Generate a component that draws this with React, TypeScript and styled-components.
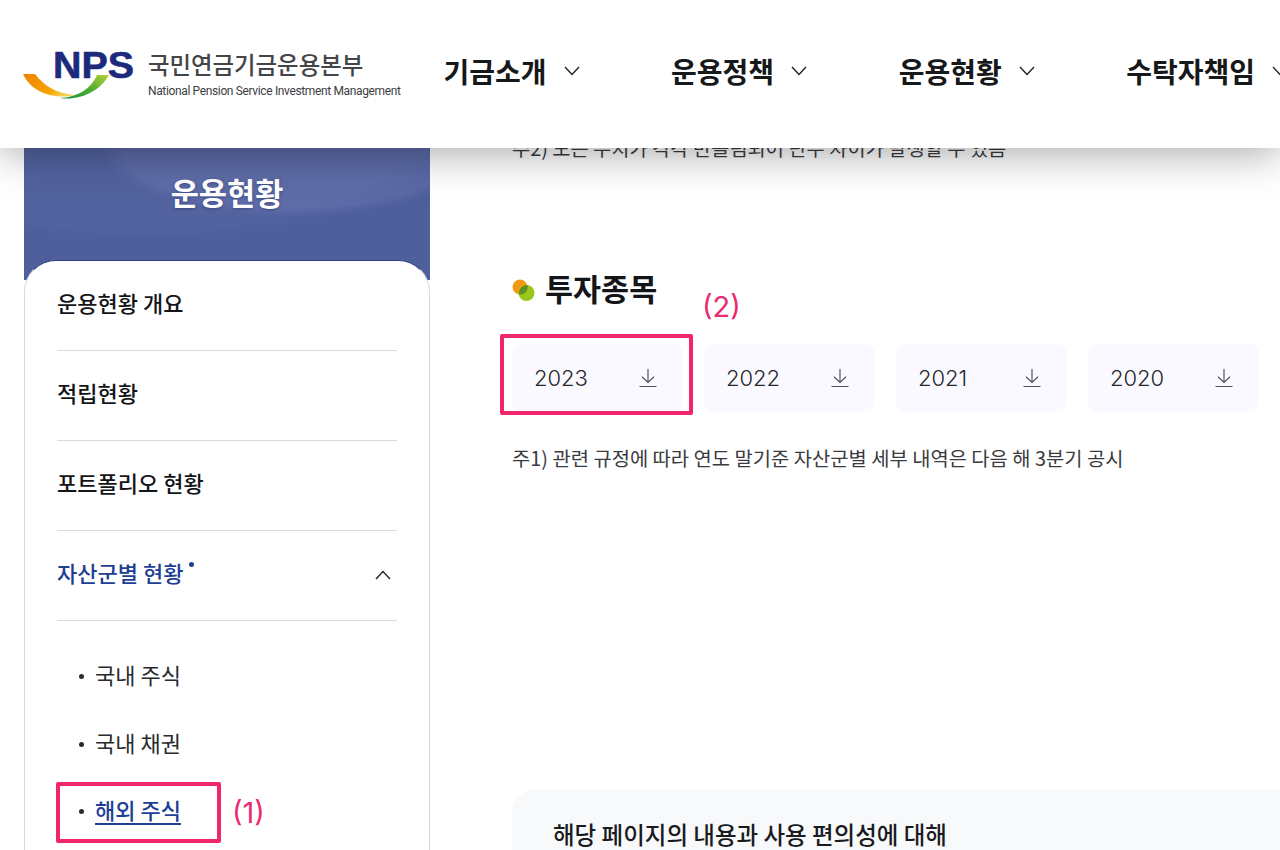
import styled, { createGlobalStyle } from "styled-components";

const GlobalStyle = createGlobalStyle`
  html, body {
    margin: 0;
    padding: 0;
    background: #fff;
  }
  body {
    font-family: "Inter", "Noto Sans CJK KR", sans-serif;
    color: #111;
  }
  *, *::before, *::after {
    box-sizing: border-box;
  }
`;

const NAV_ITEMS = ["기금소개", "운용정책", "운용현황", "수탁자책임"];
const MENU_ITEMS = ["운용현황 개요", "적립현황", "포트폴리오 현황"];
const YEARS = ["2023", "2022", "2021", "2020"];

const Chevron = ({ up, size = 16 }: { up?: boolean; size?: number }) => (
  <svg width={size} height={size * 0.6} viewBox="0 0 16 9.6" fill="none">
    <path
      d={up ? "M1 9 L8 1.5 L15 9" : "M1 1 L8 8.5 L15 1"}
      stroke="#222"
      strokeWidth="1.4"
    />
  </svg>
);

const DownloadIcon = () => (
  <svg width="18" height="20" viewBox="0 0 18 20" fill="none">
    <path
      d="M0.5 18.5 H17.5 M9 1 V14.5 M3 8.8 L9 14.5 L15 8.8"
      stroke="#55565c"
      strokeWidth="1.2"
    />
  </svg>
);

const LogoMark = () => (
  <LogoSvg width="114" height="60" viewBox="0 -8 114 60" fill="none">
    <defs>
      <linearGradient id="swooshOrange" x1="0" y1="0" x2="1" y2="0.4">
        <stop offset="0" stopColor="#ee8300" />
        <stop offset="0.7" stopColor="#f5a400" />
        <stop offset="1" stopColor="#f8cf50" />
      </linearGradient>
      <linearGradient id="swooshGreen" x1="0" y1="1" x2="1" y2="0">
        <stop offset="0" stopColor="#12933f" />
        <stop offset="0.55" stopColor="#55b030" />
        <stop offset="1" stopColor="#b5d334" />
      </linearGradient>
    </defs>
    <text
      x="30"
      y="29"
      fontFamily="Liberation Sans, sans-serif"
      fontWeight="700"
      fontSize="36"
      textLength="81"
      lengthAdjust="spacingAndGlyphs"
      fill="#1d2a7c"
      stroke="#1d2a7c"
      strokeWidth="0.6"
    >
      NPS
    </text>
    <path
      d="M0 25 L12 25 C21 37 33 44 51 46 C37 50 10 47 0 25 Z"
      fill="url(#swooshOrange)"
    />
    <path
      d="M74 26 L86 26 C77 42 57 52 37 49 C52 48 67 42 74 26 Z"
      fill="url(#swooshGreen)"
    />
  </LogoSvg>
);

const TitleBullet = () => (
  <BulletSvg width="24" height="24" viewBox="0 0 24 24">
    <circle cx="8" cy="8" r="7.5" fill="#f39a12" />
    <circle cx="14.5" cy="14" r="8" fill="#9ac51a" />
    <path
      d="M8 15.5 A7.5 7.5 0 0 0 15.4 6.05 A8 8 0 0 0 7.1 15.45 Z"
      fill="#5f8f22"
    />
  </BulletSvg>
);

export default function App() {
  return (
    <>
      <GlobalStyle />
      <Page>
        <Header>
          <Logo>
            <LogoMark />
            <LogoText>
              <LogoTitle>국민연금기금운용본부</LogoTitle>
              <LogoSub>National Pension Service Investment Management</LogoSub>
            </LogoText>
          </Logo>
          <Nav>
            {NAV_ITEMS.map((item) => (
              <NavItem key={item}>
                {item}
                <Chevron />
              </NavItem>
            ))}
          </Nav>
        </Header>

        <Body>
          <Sidebar>
            <SideHero>
              <SideTitle>운용현황</SideTitle>
            </SideHero>
            <SideCard>
              {MENU_ITEMS.map((item) => (
                <MenuRow key={item}>{item}</MenuRow>
              ))}
              <MenuRow $active>
                <ActiveLabel>자산군별 현황</ActiveLabel>
                <ActiveChevron>
                  <Chevron up />
                </ActiveChevron>
              </MenuRow>
              <SubList>
                <SubItem>국내 주식</SubItem>
                <SubItem>국내 채권</SubItem>
                <SubItem $selected>
                  <u>해외 주식</u>
                  <Callout $top={15} $left={175}>
                    (1)
                  </Callout>
                </SubItem>
              </SubList>
            </SideCard>
          </Sidebar>

          <Main>
            <Footnote>주2) 모든 수치가 각각 반올림되어 단수 차이가 발생할 수 있음</Footnote>
            <SectionTitle>
              <TitleBullet />
              투자종목
            </SectionTitle>
            <YearRow>
              {YEARS.map((year, i) => (
                <YearButton key={year} $selected={i === 0}>
                  {year}
                  <DownloadIcon />
                  {i === 0 && (
                    <Callout $top={-57} $left={190}>
                      (2)
                    </Callout>
                  )}
                </YearButton>
              ))}
            </YearRow>
            <Note>주1) 관련 규정에 따라 연도 말기준 자산군별 세부 내역은 다음 해 3분기 공시</Note>
            <Feedback>해당 페이지의 내용과 사용 편의성에 대해</Feedback>
          </Main>
        </Body>
      </Page>
    </>
  );
}

const Page = styled.div`
  position: relative;
  width: 1280px;
  height: 850px;
  overflow: hidden;
  background: #fff;
`;

const Header = styled.header`
  position: absolute;
  top: 0;
  left: 0;
  z-index: 10;
  width: 100%;
  height: 148px;
  display: flex;
  align-items: center;
  padding-left: 23px;
  background: #fff;
  box-shadow: 0 4px 40px rgba(0, 0, 0, 0.36);
`;

const Logo = styled.div`
  display: flex;
  align-items: center;
  gap: 11px;
  margin-top: 1px;
`;

const LogoSvg = styled.svg`
  margin-top: -8px;
`;

const LogoText = styled.div`
  display: flex;
  flex-direction: column;
  gap: 5px;
  margin-top: -2px;
`;

const LogoTitle = styled.div`
  font-family: "Noto Sans CJK KR", sans-serif;
  font-size: 23.4px;
  line-height: 30px;
  font-weight: 500;
  color: #444548;
  white-space: nowrap;
`;

const LogoSub = styled.div`
  font-family: "Roboto", sans-serif;
  font-size: 12px;
  line-height: 14px;
  letter-spacing: -0.36px;
  color: #3d3e42;
  white-space: nowrap;
`;

const Nav = styled.nav`
  display: flex;
  align-items: center;
  margin-left: 43px;
  gap: 91.5px;
`;

const NavItem = styled.div`
  display: flex;
  align-items: center;
  gap: 17px;
  font-family: "Noto Sans CJK KR", sans-serif;
  font-size: 28px;
  font-weight: 700;
  color: #17181a;
  white-space: nowrap;
  margin-top: -6px;
`;

const Body = styled.div`
  display: flex;
  gap: 82px;
  padding-left: 24px;
`;

const Sidebar = styled.aside`
  flex: 0 0 406px;
  display: flex;
  flex-direction: column;
`;

const SideHero = styled.div`
  height: 280px;
  padding-top: 167px;
  text-align: center;
  background:
    radial-gradient(ellipse 190px 66px at 66% 150px, rgba(125, 135, 195, 0.26) 0 88%, transparent 100%),
    radial-gradient(ellipse 300px 110px at 30% 130px, rgba(110, 120, 180, 0.14) 0 90%, transparent 100%),
    #4e5f9c;
`;

const SideTitle = styled.h2`
  margin: 0;
  font-family: "Noto Sans CJK KR", sans-serif;
  font-size: 30.6px;
  line-height: 50px;
  font-weight: 700;
  color: #fff;
  text-shadow: 0 1px 3px rgba(30, 40, 90, 0.45);
`;

const SideCard = styled.div`
  margin-top: -20px;
  padding: 0 32px;
  height: 620px;
  background: #fff;
  border: 1px solid #d8d9dc;
  border-top-color: #2f4489;
  border-radius: 32px 32px 0 0;
`;

const MenuRow = styled.div<{ $active?: boolean }>`
  display: flex;
  align-items: center;
  justify-content: space-between;
  height: 90px;
  padding: 0 6px 7px 0;
  border-bottom: 1px solid #d9dadd;
  font-family: "Noto Sans CJK KR", sans-serif;
  font-size: 22px;
  font-weight: 500;
  color: ${(p) => (p.$active ? "#1d4094" : "#141518")};
`;

const ActiveLabel = styled.span`
  position: relative;
  &::after {
    content: "";
    position: absolute;
    top: 6px;
    right: -11px;
    width: 5px;
    height: 5px;
    border-radius: 50%;
    background: #1d4094;
  }
`;

const ActiveChevron = styled.span`
  display: flex;
  margin-top: 6px;
`;

const SubList = styled.ul`
  list-style: none;
  margin: 0;
  padding: 22px 0 0;
`;

const SubItem = styled.li<{ $selected?: boolean }>`
  position: relative;
  height: 67.5px;
  display: flex;
  align-items: center;
  padding: 0 0 5px 38px;
  font-family: "Noto Sans CJK KR", sans-serif;
  font-size: 22px;
  font-weight: ${(p) => (p.$selected ? 500 : 400)};
  color: ${(p) => (p.$selected ? "#1d4094" : "#2a2b2e")};

  u {
    text-underline-offset: 4px;
    text-decoration-thickness: 2px;
  }

  &::before {
    content: "";
    position: absolute;
    left: 22px;
    top: 50%;
    width: 5px;
    height: 5px;
    margin-top: -2.5px;
    border-radius: 50%;
    background: #2a2b2e;
  }

  ${(p) =>
    p.$selected &&
    `
    &::after {
      content: "";
      position: absolute;
      left: -1px;
      top: 4px;
      width: 165px;
      height: 61px;
      border: 4px solid #f0266f;
      border-radius: 2px;
    }
  `}
`;

const Callout = styled.span<{ $top: number; $left: number }>`
  position: absolute;
  top: ${(p) => p.$top}px;
  left: ${(p) => p.$left}px;
  font-family: "Inter", sans-serif;
  font-size: 29px;
  line-height: 40px;
  font-weight: 400;
  color: #ea2a72;
  text-decoration: none;
`;

const Main = styled.main`
  flex: 1;
  min-width: 0;
  padding-top: 134px;
`;

const Footnote = styled.p`
  margin: 0;
  font-family: "Noto Sans CJK KR", sans-serif;
  font-size: 19.8px;
  line-height: 28px;
  color: #3a3b3f;
  white-space: nowrap;
`;

const SectionTitle = styled.h3`
  display: flex;
  align-items: center;
  gap: 9px;
  margin: 106px 0 0;
  height: 40px;
  font-family: "Noto Sans CJK KR", sans-serif;
  font-size: 30.5px;
  font-weight: 700;
  color: #141518;
`;

const BulletSvg = styled.svg`
  margin-top: 6px;
`;

const YearRow = styled.div`
  display: flex;
  gap: 21px;
  margin-top: 36px;
`;

const YearButton = styled.div<{ $selected?: boolean }>`
  position: relative;
  flex: 0 0 171px;
  height: 68px;
  display: flex;
  align-items: center;
  justify-content: space-between;
  padding: 0 26px 0 22px;
  background: #f9f9ff;
  border-radius: 10px;
  font-size: 22px;
  font-weight: 300;
  color: #26272b;

  ${(p) =>
    p.$selected &&
    `
    &::after {
      content: "";
      position: absolute;
      top: -10px;
      left: -12px;
      right: -10px;
      bottom: -3px;
      border: 4px solid #f0266f;
      border-radius: 2px;
    }
  `}
`;

const Note = styled.p`
  margin: 31px 0 0;
  font-family: "Noto Sans CJK KR", sans-serif;
  font-size: 19.85px;
  line-height: 30px;
  color: #3a3b3f;
  white-space: nowrap;
`;

const Feedback = styled.section`
  margin-top: 316px;
  width: 900px;
  height: 120px;
  padding: 28px 41px;
  background: #f8f9fb;
  border-radius: 24px;
  font-family: "Noto Sans CJK KR", sans-serif;
  font-size: 23.5px;
  line-height: 34px;
  font-weight: 500;
  color: #1a1b1e;
  white-space: nowrap;
`;
